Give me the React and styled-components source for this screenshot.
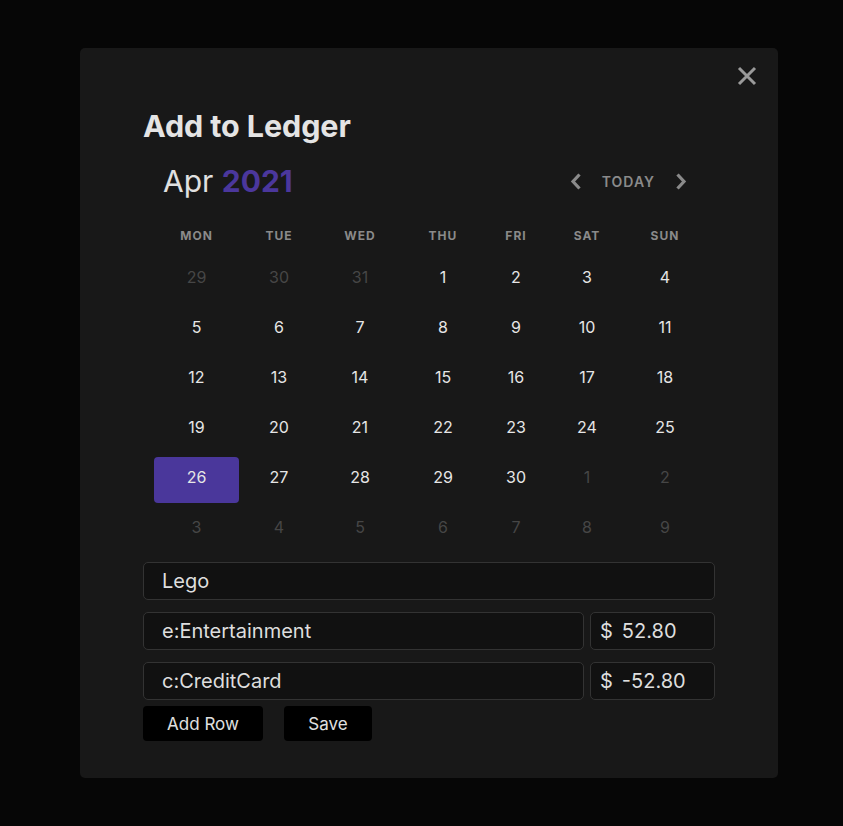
import React from "react";
import styled, { createGlobalStyle } from "styled-components";

const Global = createGlobalStyle`
  html, body { margin: 0; padding: 0; background: #060606; }
  body { font-family: Inter, "Noto Sans", sans-serif; }
  * { box-sizing: border-box; }
`;

const Page = styled.div`
  min-height: 826px;
  padding: 48px 0 0 80px;
`;

const Modal = styled.div`
  position: relative;
  width: 698px;
  height: 730px;
  background: #181818;
  border-radius: 5px;
  padding: 60px 63px 0 63px;
  display: flex;
  flex-direction: column;
`;

const Close = styled.button`
  position: absolute;
  top: 17px;
  right: 20px;
  width: 22px;
  height: 22px;
  padding: 0;
  border: none;
  background: transparent;
  display: flex;
  align-items: center;
  justify-content: center;
`;

const Title = styled.h2`
  margin: 0 0 15px;
  font-size: 30.5px;
  line-height: 36px;
  font-weight: 700;
  color: #e4e4e4;
  letter-spacing: -0.1px;
`;

const CalHeader = styled.div`
  height: 44px;
  display: flex;
  align-items: center;
  justify-content: space-between;
  padding: 0 28px 0 20px;
`;

const MonthLabel = styled.div`
  font-size: 30px;
  color: #e0e0e0;
  font-weight: 400;
  span {
    color: #4b379c;
    font-weight: 700;
  }
`;

const Nav = styled.div`
  display: flex;
  align-items: center;
  gap: 20px;
`;

const Today = styled.span`
  font-size: 14px;
  font-weight: 600;
  letter-spacing: 1px;
  color: #8a8a8a;
`;

const Grid = styled.div`
  margin: 15px 0 0 11px;
  display: grid;
  grid-template-columns: 85px 80px 82px 84px 62px 80px 76px;
`;

const WeekDay = styled.div`
  height: 34px;
  display: flex;
  align-items: center;
  justify-content: center;
  font-size: 12px;
  font-weight: 700;
  letter-spacing: 1px;
  color: #8a8a8a;
`;

const Cell = styled.div`
  height: 50px;
  padding-top: 5px;
  display: flex;
`;

const Day = styled.div`
  flex: 1;
  height: 46px;
  padding-bottom: 6px;
  display: flex;
  align-items: center;
  justify-content: center;
  font-size: 16px;
  border-radius: 4px;
  color: ${(p) => (p.$dim ? "#464646" : "#e6e6e6")};
  background: ${(p) => (p.$selected ? "#4a379b" : "transparent")};
`;

const Form = styled.div`
  margin-top: 10px;
  display: flex;
  flex-direction: column;
  gap: 12px;
`;

const Row = styled.div`
  display: flex;
  gap: 6px;
`;

const Field = styled.div`
  flex: ${(p) => (p.$w ? `0 0 ${p.$w}px` : "1")};
  height: 38px;
  background: #111111;
  border: 1px solid #333333;
  border-radius: 5px;
  display: flex;
  align-items: center;
  padding-left: ${(p) => (p.$w ? 9 : 18)}px;
  font-size: 20px;
  color: #dedede;
`;

const Dollar = styled.span`
  margin-right: 9px;
`;

const Buttons = styled.div`
  margin-top: -6px;
  display: flex;
  gap: 21px;
`;

const Button = styled.button`
  height: 35px;
  width: ${(p) => p.$w}px;
  background: #000;
  border: none;
  border-radius: 4px;
  color: #e0e0e0;
  font-family: Inter, "Noto Sans", sans-serif;
  font-size: 17px;
  padding: 0;
`;

const Chevron = ({ dir }) => (
  <svg width="12" height="17" viewBox="0 0 12 17">
    <path
      d={dir === "left" ? "M9.5 1.5 L3 8.5 L9.5 15.5" : "M2.5 1.5 L9 8.5 L2.5 15.5"}
      fill="none"
      stroke="#8a8a8a"
      strokeWidth="3.2"
    />
  </svg>
);

const weekdays = ["MON", "TUE", "WED", "THU", "FRI", "SAT", "SUN"];
const days = [
  [29, 30, 31, 1, 2, 3, 4],
  [5, 6, 7, 8, 9, 10, 11],
  [12, 13, 14, 15, 16, 17, 18],
  [19, 20, 21, 22, 23, 24, 25],
  [26, 27, 28, 29, 30, 1, 2],
  [3, 4, 5, 6, 7, 8, 9],
];

export default function App() {
  return (
    <>
      <Global />
      <Page>
        <Modal>
          <Close aria-label="close">
            <svg width="20" height="20" viewBox="0 0 20 20">
              <path d="M2 2 L18 18 M18 2 L2 18" stroke="#9a9a9a" strokeWidth="3" />
            </svg>
          </Close>
          <Title>Add to Ledger</Title>
          <CalHeader>
            <MonthLabel>
              Apr <span>2021</span>
            </MonthLabel>
            <Nav>
              <Chevron dir="left" />
              <Today>TODAY</Today>
              <Chevron dir="right" />
            </Nav>
          </CalHeader>
          <Grid>
            {weekdays.map((w) => (
              <WeekDay key={w}>{w}</WeekDay>
            ))}
            {days.map((row, r) =>
              row.map((d, c) => {
                const dim = (r === 0 && d > 20) || (r >= 4 && d < 15);
                const selected = r === 4 && d === 26;
                return (
                  <Cell key={`${r}-${c}`}>
                    <Day $dim={dim} $selected={selected}>
                      {d}
                    </Day>
                  </Cell>
                );
              })
            )}
          </Grid>
          <Form>
            <Row>
              <Field>Lego</Field>
            </Row>
            <Row>
              <Field>e:Entertainment</Field>
              <Field $w={125}>
                <Dollar>$</Dollar>52.80
              </Field>
            </Row>
            <Row>
              <Field>c:CreditCard</Field>
              <Field $w={125}>
                <Dollar>$</Dollar>-52.80
              </Field>
            </Row>
            <Buttons>
              <Button $w={120}>Add Row</Button>
              <Button $w={88}>Save</Button>
            </Buttons>
          </Form>
        </Modal>
      </Page>
    </>
  );
}
